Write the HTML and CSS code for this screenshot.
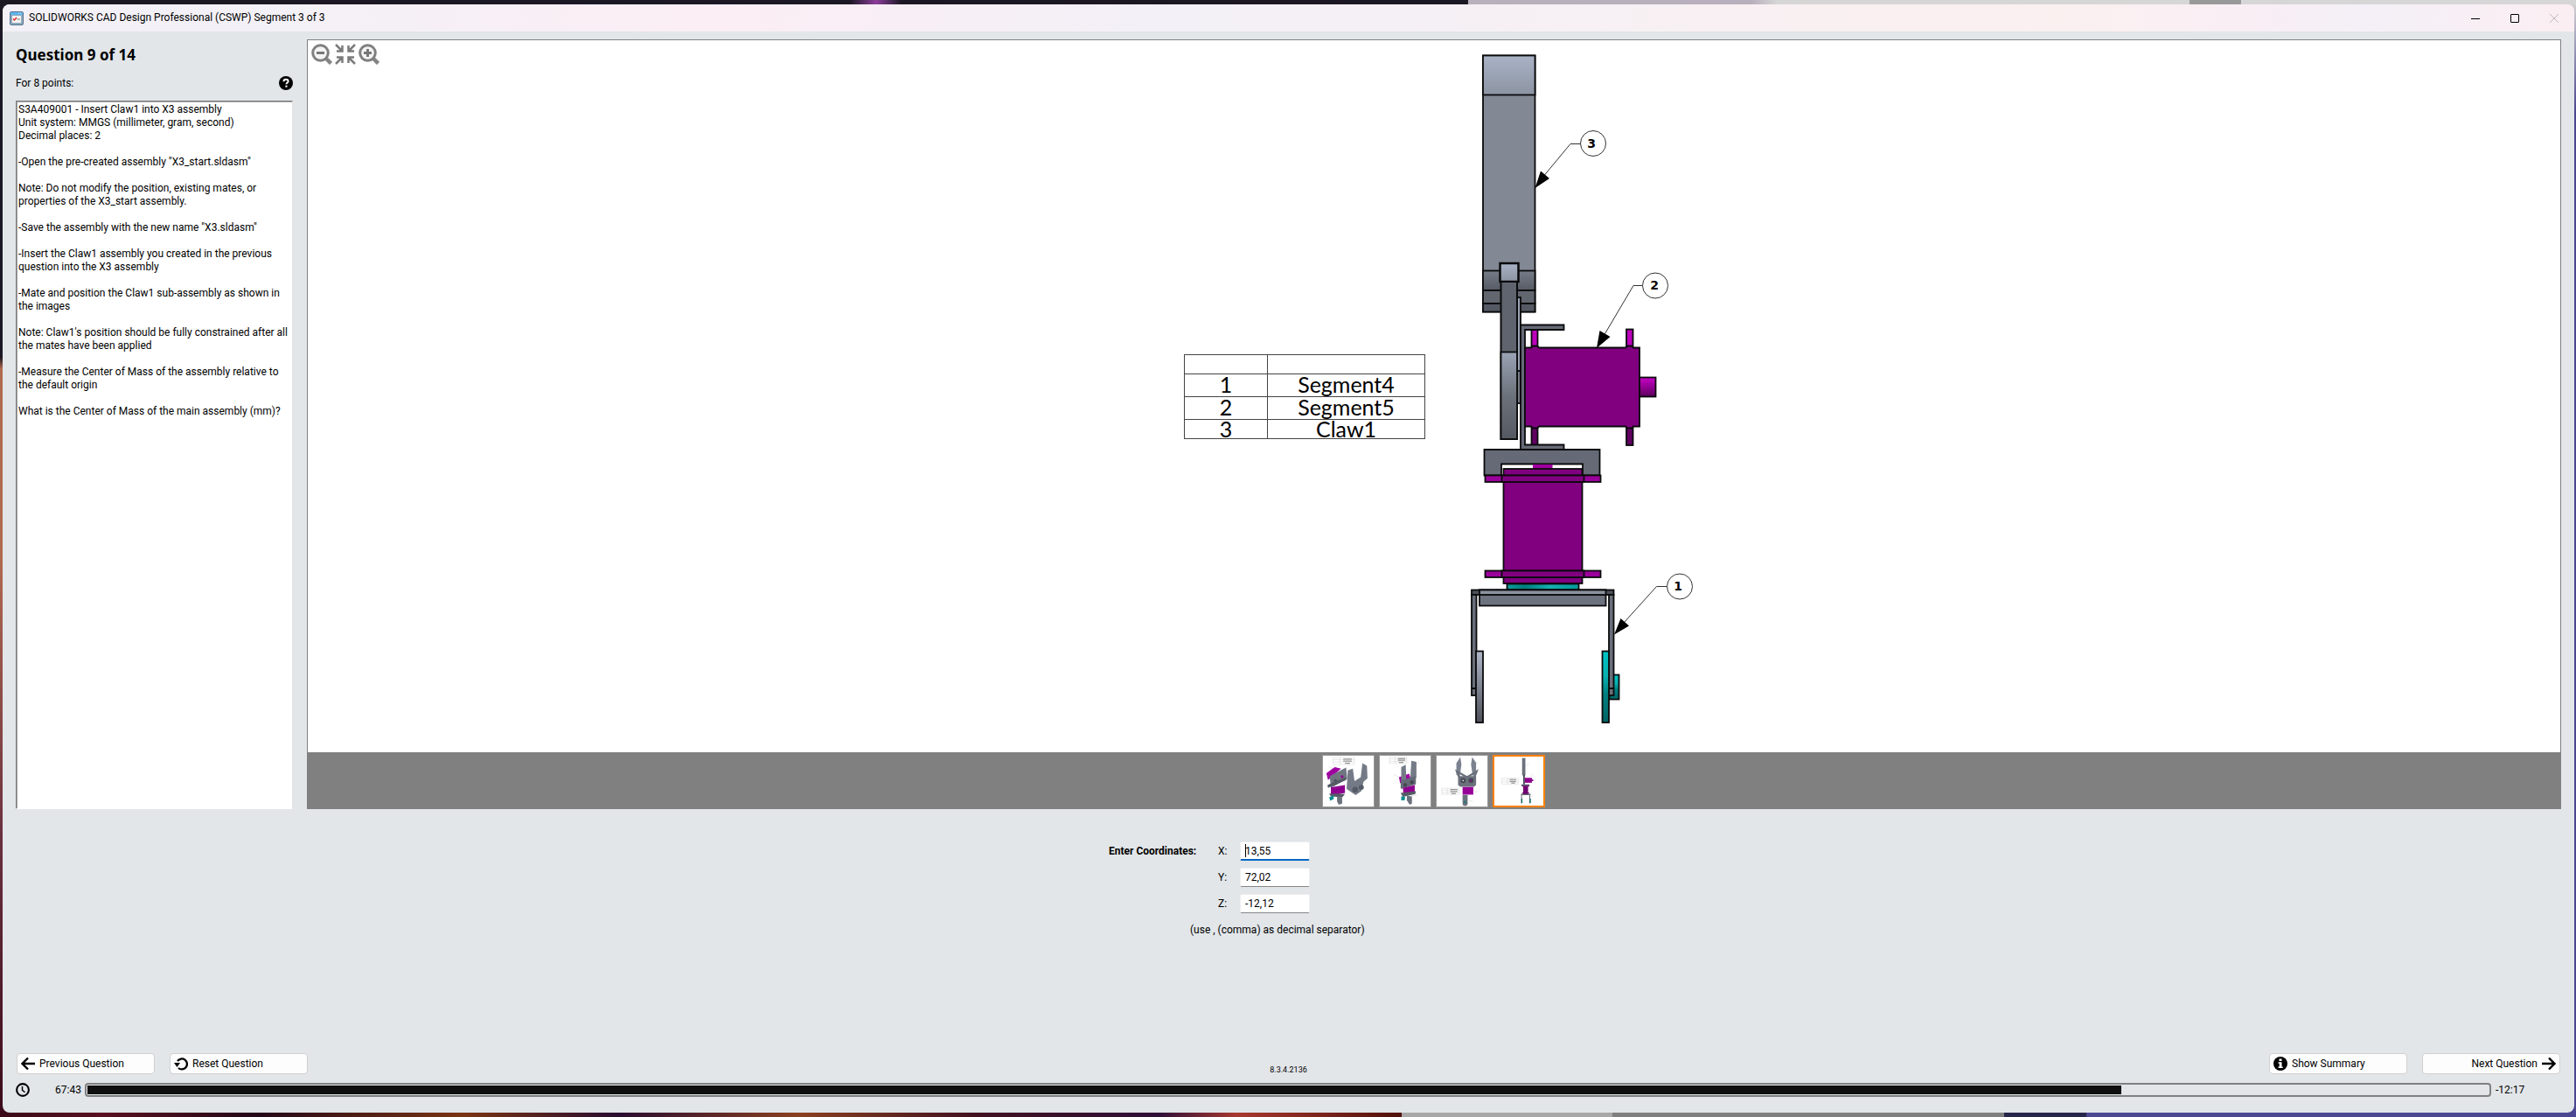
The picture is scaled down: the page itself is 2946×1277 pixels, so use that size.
FILE: index.html
```html
<!DOCTYPE html>
<html lang="en">
<head>
<meta charset="utf-8">
<title>SOLIDWORKS CAD Design Professional (CSWP) Segment 3 of 3</title>
<link rel="stylesheet" href="styles.css">
</head>
<body>
<div class="window">
  <header class="titlebar">
    <svg class="app-icon" viewBox="0 0 16 16" aria-hidden="true">
      <rect x=".5" y=".5" width="15" height="15" rx="1.5" fill="#8fa9bd" stroke="#56748c"/>
      <rect x="1" y="1" width="14" height="3" fill="#5fb4ee"/>
      <path d="M10 2h1M12 2h1" stroke="#e8f6ff"/>
      <rect x="3" y="5" width="10" height="8" fill="#f4f4f2"/>
      <path d="M4 8.500l1.500 1.500L8 7" fill="none" stroke="#e02020" stroke-width="1.300"/>
      <path d="M8.500 9H12" stroke="#777"/>
    </svg>
    <span class="title">SOLIDWORKS CAD Design Professional (CSWP) Segment 3 of 3</span>
    <div class="caption-buttons">
      <button class="caption" aria-label="Minimize"><svg viewBox="0 0 10 10"><path d="M0 5.500h10" stroke="#000"/></svg></button>
      <button class="caption" aria-label="Maximize"><svg viewBox="0 0 10 10"><rect x=".5" y=".5" width="9" height="9" rx=".5" fill="none" stroke="#000"/></svg></button>
      <button class="caption" aria-label="Close" disabled><svg viewBox="0 0 10 10"><path d="M0 0l10 10M10 0L0 10" stroke="#bdb8bd"/></svg></button>
    </div>
  </header>

  <main class="workspace">
    <section class="question">
      <h1>Question 9 of 14</h1>
      <div class="points">
        <span>For 8 points:</span>
        <button class="help" aria-label="Help">
          <svg viewBox="0 0 16 16"><circle cx="8" cy="8" r="8"/><path d="M5.400 6.200C5.400 4.500 6.500 3.700 8 3.700s2.600.8 2.600 2.200c0 1.700-2.100 1.700-2.100 3.400" fill="none" stroke="#fff" stroke-width="1.900"/><rect x="7.400" y="10.700" width="2.100" height="2" fill="#fff"/></svg>
        </button>
      </div>
      <div class="question-text">S3A409001 - Insert Claw1 into X3 assembly
Unit system: MMGS (millimeter, gram, second)
Decimal places: 2

-Open the pre-created assembly "X3_start.sldasm"

Note: Do not modify the position, existing mates, or
properties of the X3_start assembly.

-Save the assembly with the new name "X3.sldasm"

-Insert the Claw1 assembly you created in the previous
question into the X3 assembly

-Mate and position the Claw1 sub-assembly as shown in
the images

Note: Claw1's position should be fully constrained after all
the mates have been applied

-Measure the Center of Mass of the assembly relative to
the default origin

What is the Center of Mass of the main assembly (mm)?</div>
    </section>

    <section class="viewer">
      <div class="zoom-tools">
        <button aria-label="Zoom out"><svg viewBox="0 0 24 24"><path d="M17 17l5.500 5.500" stroke="#858585" stroke-width="4.500"/><circle cx="10.500" cy="10.500" r="8.800" fill="#f4f4f4" stroke="#808080" stroke-width="3"/><path d="M6 10.500h9" stroke="#777" stroke-width="3"/></svg></button>
        <button aria-label="Fit to window"><svg viewBox="0 0 24 24"><g fill="none" stroke="#7b7b7b" stroke-width="2.500"><path d="M1 1l7 7M2 8.500h6.500V2M23 1l-7 7M22 8.500h-6.500V2M1 23l7-7M2 15.500h6.500V22M23 23l-7-7M22 15.500h-6.500V22"/></g></svg></button>
        <button aria-label="Zoom in"><svg viewBox="0 0 24 24"><path d="M17 17l5.500 5.500" stroke="#858585" stroke-width="4.500"/><circle cx="10.500" cy="10.500" r="8.800" fill="#f4f4f4" stroke="#808080" stroke-width="3"/><path d="M6 10.500h9M10.500 6v9" stroke="#777" stroke-width="3"/></svg></button>
      </div>
      <div class="drawing">
        <table class="parts">
          <tr class="edge"><td></td><td></td></tr>
          <tr><td>1</td><td>Segment4</td></tr>
          <tr><td>2</td><td>Segment5</td></tr>
          <tr class="edge"><td>3</td><td>Claw1</td></tr>
        </table>
        <svg class="model" viewBox="1670 46 270 814" role="img" aria-label="Side view of the X3 assembly">
          <defs>
            <linearGradient id="tip" x2="0" y2="1"><stop offset="0" stop-color="#a9b3c6"/><stop offset="1" stop-color="#8c94a2"/></linearGradient>
            <linearGradient id="shade" x2="0" y2="1"><stop offset="0" stop-color="#767c88"/><stop offset="1" stop-color="#565a64"/></linearGradient>
            <linearGradient id="bar" x2="0" y2="1"><stop offset="0" stop-color="#9ba4b5"/><stop offset=".5" stop-color="#6c727b"/><stop offset="1" stop-color="#555962"/></linearGradient>
            <linearGradient id="pad" x2="0" y2="1"><stop offset="0" stop-color="#b0b7c8"/><stop offset="1" stop-color="#4e515a"/></linearGradient>
            <linearGradient id="teal" x2="0" y2="1"><stop offset="0" stop-color="#00c4c4"/><stop offset=".35" stop-color="#08b0b0"/><stop offset=".6" stop-color="#008080"/><stop offset="1" stop-color="#006464"/></linearGradient>
            <linearGradient id="tealwide"><stop offset="0" stop-color="#0a9c9c"/><stop offset=".25" stop-color="#007d7d"/><stop offset=".6" stop-color="#15b1b1"/><stop offset="1" stop-color="#099"/></linearGradient>
            <linearGradient id="shaft" x2="0" y2="1"><stop offset="0" stop-color="#c800c8"/><stop offset="1" stop-color="#5c005c"/></linearGradient>
          </defs>
          <g stroke="#0a0a0c" stroke-width="1.800">
            <rect x="1696" y="63.500" width="59.500" height="293" fill="#828894"/>
            <rect x="1696" y="63.500" width="59.500" height="45" fill="url(#tip)"/>
            <rect x="1696" y="309.500" width="59.500" height="22.500" fill="url(#shade)"/>
            <rect x="1696" y="332" width="59.500" height="15" fill="#62666f"/>
            <rect x="1696" y="347" width="59.500" height="9.500" fill="#555963"/>
            <rect x="1735" y="424" width="4" height="37" fill="#777d87"/>
            <rect x="1735" y="340" width="4" height="84" fill="#9aa2b4"/>
            <rect x="1715.500" y="301" width="21" height="21" fill="url(#tip)" stroke-width="2.500"/>
            <rect x="1716.500" y="322" width="18.500" height="180" fill="#60646e" stroke-width="2"/>
            <rect x="1716.500" y="402.500" width="18.500" height="99.500" fill="url(#bar)"/>
            <rect x="1751.500" y="377" width="7" height="21" fill="#bb00bb"/>
            <rect x="1860" y="376.500" width="7.500" height="21" fill="#bb00bb"/>
            <rect x="1751.500" y="488" width="7" height="21" fill="#600060"/>
            <rect x="1860" y="488" width="7.500" height="21" fill="#600060"/>
            <path d="M1739 371.500h49.500v5.500H1744v131.500h44.500v5.500H1739z" fill="#666a77"/>
            <path d="M1744 397.500h7l2-2h5l2 2h99l2-2h5l2 2h7v90h-7l-2 2h-5l-2-2h-99l-2 2h-5l-2-2h-7z" fill="#800080"/>
            <rect x="1875" y="431.500" width="18.500" height="22" fill="url(#shaft)"/>
            <path d="M1697.500 514h132v29.500H1810v-13h-93v13h-19.500z" fill="#666a77"/>
            <rect x="1753" y="531" width="22.500" height="5" fill="#a000a0" stroke="none"/>
            <rect x="1719.500" y="536" width="90" height="131" fill="#800080"/>
            <rect x="1698.500" y="543.500" width="132" height="7.500" fill="#9c009c"/>
            <rect x="1717.500" y="543.500" width="94" height="7.500" fill="#800080"/>
            <rect x="1698.500" y="652.500" width="132" height="7.500" fill="#9c009c"/>
            <rect x="1717.500" y="652.500" width="94" height="7.500" fill="#800080"/>
            <rect x="1723.500" y="667.500" width="82" height="7" fill="url(#tealwide)"/>
            <rect x="1692" y="674.500" width="144.500" height="18" fill="#6d737e"/>
            <rect x="1683" y="674.500" width="162.500" height="5.500" fill="#4c505a"/>
            <rect x="1692" y="674.500" width="144.500" height="5.500" fill="#8a929f"/>
            <rect x="1840.500" y="771.500" width="11" height="28" fill="url(#teal)"/>
            <rect x="1683" y="680" width="5.500" height="115" fill="#696f7a"/>
            <rect x="1840" y="680" width="5.500" height="115" fill="#696f7a"/>
            <path d="M1683 787h5.500M1840 787h5.500"/>
            <rect x="1688" y="744.500" width="8" height="81.500" fill="url(#pad)"/>
            <rect x="1832.500" y="744.500" width="7.500" height="81.500" fill="url(#teal)"/>
          </g>
          <g fill="none" stroke="#333">
            <circle cx="1822" cy="164" r="14.500"/><path d="M1807.500 164.500H1796L1764 203"/>
            <circle cx="1893" cy="326.500" r="14.500"/><path d="M1878.500 326.500H1868L1834 384"/>
            <circle cx="1921" cy="670.500" r="14.500"/><path d="M1906.500 670.500H1894.500L1857 712"/>
          </g>
          <path d="M1755.500 215l6.500-19.500 10 8.500zM1826 398l3.500-20 12 7zM1846 725.500l7.500-18.500 9.500 8.500z"/>
          <g class="balloon-text"><text x="1820" y="169">3</text><text x="1892" y="331">2</text><text x="1919" y="675">1</text></g>
        </svg>
      </div>
      <div class="thumbs">
        <button class="thumb" aria-label="View 1"><svg viewBox="0 0 180 180">
          <g fill="none" stroke="#bbb"><path d="M36 6h75v25H36zM36 14h75M36 22h75M60 6v25M20 38l14 8M155 33l-8 6"/></g><path d="M72 12h30M72 19h30M78 27h18" stroke="#777" stroke-width="3"/>
          <path d="M12 62l30-22 22 6-46 40z" fill="#a000a0"/><path d="M24 72l58-30 4 40-58 32z" fill="#707680"/><path d="M16 104l64-28 2 10-64 28z" fill="#555b66"/><path d="M28 112l50-8v28l-50 10z" fill="#900090"/><path d="M22 134l56 2-10 12-40-4z" fill="#555b66"/><path d="M22 148l16-8v14l-12 6z" fill="#008c8c"/><path d="M50 144l18 4v22l-12 4-6-12z" fill="#6b717c"/>
          <path d="M88 52l18-6 6 44 22-14 6-50 16 10 2 44-14 12-8 34-20 14-32-22z" fill="#747b87"/><circle cx="114" cy="120" r="10" fill="#555b66"/><circle cx="136" cy="112" r="9" fill="#555b66"/><circle cx="44" cy="88" r="6" fill="#50555f"/><circle cx="68" cy="74" r="5" fill="#900090"/></svg></button>
        <button class="thumb" aria-label="View 2"><svg viewBox="0 0 180 180">
          <g fill="none" stroke="#bbb"><path d="M34 5h62v22H34zM34 12h62M34 20h62M54 5v22M48 66l24 12M140 24l-14 10M112 142l22-2"/></g><path d="M64 10h26M64 16h26M68 24h16" stroke="#777" stroke-width="3"/>
          <path d="M68 76l36-12 8 24-40 10z" fill="#a000a0"/><path d="M76 40l16-8 2 58 14-6 4-66 18 4v54l-20 30-34 12z" fill="#747b87"/><path d="M74 88l54-16v30l-54 14z" fill="#656b76"/><path d="M82 114l42-10v26l-40 10z" fill="#900090"/><path d="M74 132l54-6-2 10-44 10z" fill="#555b66"/><path d="M76 144l14 2-2 12h-12z" fill="#008c8c"/><path d="M96 142l18 2v26l-8 4-10-16z" fill="#6b717c"/><circle cx="90" cy="104" r="7" fill="#454a54"/><circle cx="114" cy="94" r="7" fill="#454a54"/></svg></button>
        <button class="thumb" aria-label="View 3"><svg viewBox="0 0 180 180">
          <g fill="none" stroke="#bbb"><path d="M18 115h62v22H18zM18 122h62M18 130h62M38 115v22M134 26l14-2M132 124l14 4M114 158l14 4"/></g><path d="M48 120h26M48 127h26M52 134h16" stroke="#777" stroke-width="3"/>
          <path d="M84 5L70 26v42l12 4 6-40zM126 5l14 20v42l-12 4-6-40z" fill="#7b828f"/><path d="M72 56l36 20 34-20-10 24H82z" fill="none" stroke="#6b717c" stroke-width="7"/><path d="M76 72h64v32l-8 6H84l-8-6z" fill="#6b717c"/><circle cx="94" cy="88" r="9" fill="#444852"/><circle cx="122" cy="88" r="9" fill="#444852"/><circle cx="94" cy="88" r="3" fill="#ddd"/><circle cx="122" cy="88" r="3" fill="#a000a0"/><path d="M92 111h38v27H92z" fill="#980098"/><path d="M92 139h18v30a9 9 0 01-18 0z" fill="#6b717c"/><circle cx="101" cy="164" r="5" fill="#377"/></svg></button>
        <button class="thumb selected" aria-label="View 4"><svg viewBox="0 0 180 180">
          <g fill="none" stroke="#bbb"><path d="M27 79h61v22H27zM27 87h61M27 94h61M48 79v22M115 34l12-8M132 74l12-12M132 150l14-12"/></g><path d="M56 84h24M56 91h24M62 97h14" stroke="#777" stroke-width="3"/>
          <path d="M102 5h12v64h-12z" fill="#6b717c"/><path d="M106 66h6v36h-6z" fill="#444852"/><path d="M112 78h26v18h-26z" fill="#900090"/><path d="M138 84h5v6h-5z" fill="#700070"/><path d="M99 102h30v6H99z" fill="#555b66"/><path d="M106 108h18v32h-18zM102 107h26v3h-26zM102 132h26v4h-26z" fill="#700070"/><path d="M100 172v-33h30v33M98 139h36" fill="none" stroke="#555b66" stroke-width="3"/><path d="M101 154v16M132 154v16" stroke="#066" stroke-width="4"/></svg></button>
      </div>
    </section>
  </main>

  <form class="answer">
    <div class="fields">
      <strong>Enter Coordinates:</strong><label for="x">X:</label><input id="x" class="active" type="text" value="13,55">
      <label for="y">Y:</label><input id="y" type="text" value="72,02">
      <label for="z">Z:</label><input id="z" type="text" value="-12,12">
      <p>(use , (comma) as decimal separator)</p>
    </div>
  </form>

  <footer>
    <nav class="actions">
      <div class="group">
        <button class="action"><svg viewBox="0 0 16 16"><path d="M1.500 8H16M8 1.500L1.500 8 8 14.500" fill="none" stroke="#000" stroke-width="2.400"/></svg>Previous Question</button>
        <button class="action"><svg viewBox="0 0 16 16"><path d="M4 5a6 6 0 1 1 1 8" fill="none" stroke="#000" stroke-width="2.300"/><path d="M0 7h7L3.500 12z"/></svg>Reset Question</button>
      </div>
      <span class="version">8.3.4.2136</span>
      <div class="group end">
        <button class="action"><svg viewBox="0 0 16 16"><circle cx="8" cy="8" r="8"/><path d="M6.500 2.500H9.500V5H6.500zM5.500 6.300h4V11.500h1.200V13H5.500v-1.500h1.200V7.800H5.500z" fill="#fff"/></svg>Show Summary</button>
        <button class="action next">Next Question<svg viewBox="0 0 16 16"><path d="M0 8h14.500M8 1.500L14.500 8 8 14.500" fill="none" stroke="#000" stroke-width="2.400"/></svg></button>
      </div>
    </nav>
    <div class="timer">
      <svg class="clock" viewBox="0 0 16 16"><circle cx="8" cy="8" r="6.900" fill="none" stroke="#000" stroke-width="2.100"/><path d="M7.500 4v4.200l3 2.600" fill="none" stroke="#000" stroke-width="1.500"/></svg>
      <span class="elapsed">67:43</span>
      <progress max="1000" value="847" aria-label="Elapsed time"></progress>
      <span class="remaining">-12:17</span>
    </div>
  </footer>
</div>
</body>
</html>
```

FILE: styles.css
```css
* { box-sizing: border-box; }

body {
  margin: 0;
  min-height: 100vh;
  display: flex;
  padding: 5px 2px 5px 3px;
  font: 12px/15px Roboto, "Noto Sans", sans-serif;
  color: #000;
  background:
    linear-gradient(90deg, #1b1824 0 33%, #8c3c9a 34%, #1b1824 35% 57%, #b9b0bd 57% 68%, #d6d6d6 69% 85%, #999 85% 87%, #d6d6d6 87%) top / 100% 6px no-repeat,
    linear-gradient(90deg, #3a0a18, #5a1020 4%, #240818 10%, #7a3412 18%, #2a0c30 24%, #8a4020 31%, #401020 38%, #301038 45%, #a83830 48%, #501008 54.400%, #a8a8a8 54.400% 62.600%, #7f7f7f 62.600% 77.800%, #26264a 77.800% 81%, #4b4790 81%) bottom / 100% 6px no-repeat,
    linear-gradient(#1b1824 0 32%, #b06a50 33% 50%, #6a3040 75%, #3a0a18) left / 50% 100% no-repeat,
    linear-gradient(#d6d6d6, #4b4790 10%);
}

button, input { font: inherit; color: inherit; }
button { border: 0; padding: 0; background: none; }
svg { display: block; }

.window {
  flex: 1;
  display: flex;
  flex-direction: column;
  overflow: hidden;
  border-radius: 8px;
  background: #e2e6e9;
}

.titlebar {
  display: flex;
  align-items: center;
  height: 31px;
  padding: 0 1px 0 8px;
  background: linear-gradient(90deg, #f3f1f7 0 10%, #fbeef4 28%, #f3f0f7 45%, #fbf0f0 80%, #f9eef4 87%, #f4f0f7 92%, #fbeef2);
}
.app-icon { width: 16px; height: 16px; }
.title { padding-left: 6px; }
.caption-buttons { display: flex; margin-left: auto; }
.caption { width: 45px; height: 31px; display: grid; place-items: center; }
.caption svg { width: 10px; height: 10px; }

.workspace {
  flex: 1;
  display: grid;
  grid-template-columns: 317px 1fr;
  gap: 16px;
  padding: 9px 15px 0;
}
.question { display: flex; flex-direction: column; }
h1 { margin: 6px 0 0; font: bold 17px/24px "Noto Sans", sans-serif; }
.points {
  display: flex;
  align-items: center;
  justify-content: space-between;
  height: 40px;
}
.help, .help svg { width: 16px; height: 16px; }
.question-text {
  flex: 1;
  padding: 2px;
  border: 1px solid;
  border-color: #808080 #e3e3e3 #fff #808080;
  box-shadow: inset 1px 1px #a0a0a0;
  background: #fff;
  white-space: pre-wrap;
}

.viewer {
  position: relative;
  display: flex;
  flex-direction: column;
  border: 1px solid #808080;
  border-bottom: 0;
  background: #fff;
}
.zoom-tools { position: absolute; left: 4px; top: 4px; display: flex; gap: 3px; }
.zoom-tools button { width: 24px; height: 24px; }
.zoom-tools svg { width: 24px; height: 24px; }
.drawing {
  flex: 1;
  display: flex;
  align-items: center;
  justify-content: center;
  gap: 40px;
  padding-left: 14px;
}
.model { width: 270px; height: 814px; }
.balloon-text { font: bold 14px "DejaVu Sans", sans-serif; text-anchor: middle; }

.parts {
  width: 276px;
  table-layout: fixed;
  border-collapse: collapse;
  font: 25px/20px Lato, sans-serif;
  color: #000;
  text-align: center;
}
.parts td { height: 26px; padding: 0 0 3px; border: 1px solid #444; }
.parts td:first-child { width: 95px; }
.parts .edge td { height: 22px; padding: 0; }

.thumbs {
  display: flex;
  justify-content: center;
  gap: 5px;
  padding: 3px 2px 2px 0;
  background: #808080;
}
.thumb { width: 60px; height: 60px; border: 1px solid #999; background: #fff; }
.thumb svg { width: 100%; height: 100%; }
.selected { border: 2px solid #ff8000; }

.answer { display: flex; justify-content: center; padding: 37px 0 130px; }
.fields {
  display: grid;
  grid-template-columns: 125px 25px 80px 181px;
  grid-auto-rows: 22px;
  row-gap: 8px;
  align-items: center;
}
.fields label { grid-column: 2; }
.fields input {
  grid-column: 3;
  width: 80px;
  height: 22px;
  padding: 0 5px;
  border: 1px solid #eceeef;
  border-bottom-color: #868686;
  border-radius: 2px;
  background: #fff;
}
.fields .active {
  border-bottom: 2px solid #0067c0;
  background: linear-gradient(#000, #000) 5px 2px / 1px 15px no-repeat, #fff;
}
.fields p { grid-column: 1 / -1; margin: 0 0 0 93px; }

.actions {
  display: grid;
  grid-template-columns: 1fr auto 1fr;
  padding: 0 16px;
}
.group { display: flex; gap: 17px; }
.end { justify-content: flex-end; }
.action {
  display: flex;
  align-items: center;
  gap: 5px;
  width: 158px;
  height: 24px;
  padding: 0 4px;
  border: 1px solid #d0d0d0;
  border-radius: 4px;
  background: #fdfdfd;
}
.action svg { width: 16px; height: 16px; }
.next { justify-content: flex-end; }
.version { padding-top: 14px; font-size: 9px; line-height: 10px; }

.timer { display: flex; align-items: center; padding: 10px 56px 18px 15px; }
.clock { width: 16px; height: 16px; }
.elapsed { width: 63px; padding-right: 4px; text-align: right; }
.remaining { width: 39px; padding-left: 5px; }
progress {
  flex: 1;
  height: 16px;
  padding: 1px;
  appearance: none;
  border: 2px solid #808080;
  border-radius: 4px;
  background: #e2e6e9;
}
progress::-webkit-progress-bar { background: #e2e6e9; }
progress::-webkit-progress-value { background: #0f0f0f; }
```
